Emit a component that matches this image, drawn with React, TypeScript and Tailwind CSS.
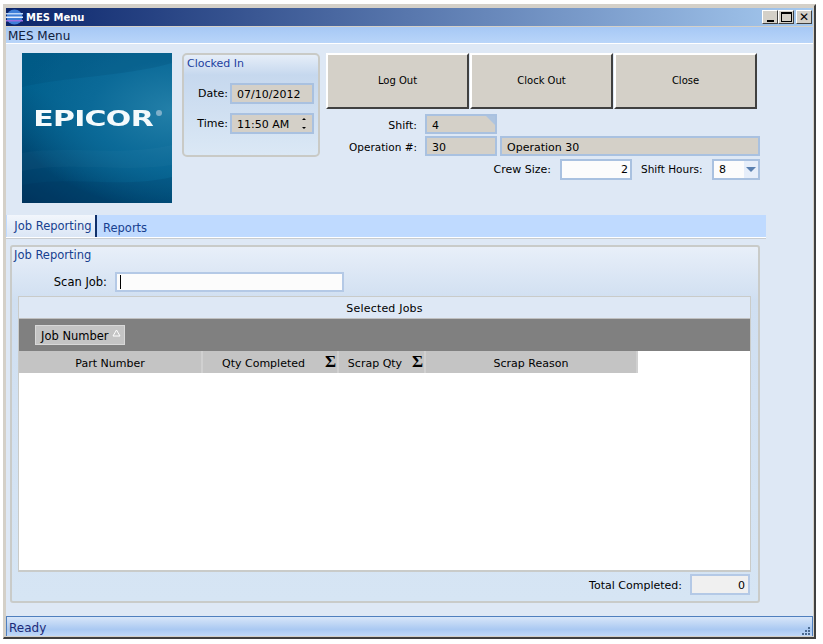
import React from "react";

const field = "flex items-center border-2 border-[#a9c1e0] bg-[#d4d0c8] px-[5px] pt-[2px] text-[11px] text-black";

function Sigma() {
  return <span className="w-[13px] text-center font-['Liberation_Serif',serif] text-[17px] font-bold leading-none text-black">Σ</span>;
}

function HeaderCell({ label, width, sigma }: { label: string; width: string; sigma?: boolean }) {
  return (
    <div className={`flex h-full items-center border-r-2 border-[#d0d0d0] ${width}`}>
      <span className="flex-1 pt-[3px] text-center">{label}</span>
      {sigma && <Sigma />}
    </div>
  );
}

function Logo() {
  return (
    <div className="relative flex h-[150px] w-[150px] shrink-0 items-center justify-center overflow-hidden bg-[radial-gradient(ellipse_at_100%_38%,#237fa8_0%,#0b6a98_38%,transparent_75%),linear-gradient(205deg,#05608f_0%,#005f8c_45%,#00365f_100%)]">
      <svg className="absolute inset-0" width="150" height="150" viewBox="0 0 150 150" fill="none">
        <path d="M0 34 C40 24 100 24 150 10 V0 H0 Z" fill="#00476f" opacity="0.2" />
        <path d="M0 100 C40 92 100 104 150 92 V112 C100 120 50 108 0 118 Z" fill="#ffffff" opacity="0.025" />
        <path d="M0 132 C50 122 100 136 150 124 V150 H0 Z" fill="#002a50" opacity="0.15" />
      </svg>
      <span className="relative ml-[-8px] mt-[-18px] scale-x-[1.36] font-['DejaVu_Sans',sans-serif] text-[22px] font-bold leading-none tracking-[-0.5px] text-[#f4fafc] blur-[0.5px]">
        EPICOR
      </span>
      <div className="absolute left-[134px] top-[57px] h-[6px] w-[6px] rounded-full bg-[#7fb0ca]" />
    </div>
  );
}

function TitleIcon() {
  return (
    <svg width="17" height="16" viewBox="0 0 17 16" className="shrink-0">
      <ellipse cx="8.5" cy="8" rx="8" ry="7.5" fill="#3f7fd8" />
      <rect x="0" y="4" width="17" height="1.5" fill="#bcd6f8" />
      <rect x="0" y="7.5" width="17" height="1.5" fill="#e4eefc" />
      <rect x="0" y="11" width="17" height="1.5" fill="#9a6fe0" />
    </svg>
  );
}

function WinButton({ children }: { children: React.ReactNode }) {
  return (
    <div className="flex h-[14px] w-[16px] items-center justify-center border border-b-[#404040] border-l-white border-r-[#404040] border-t-white bg-[#d4d0c8]">
      {children}
    </div>
  );
}

export default function App() {
  return (
    <div className="h-[644px] w-[823px] overflow-hidden bg-white pl-[3px] pt-[4px] font-['DejaVu_Sans',sans-serif] text-[11px] leading-none text-black">
      <div className="flex h-[635px] w-[813px] flex-col border-b-2 border-l border-r-2 border-t-2 border-b-[#404040] border-l-[#d4d0c8] border-r-[#404040] border-t-[#d4d0c8] bg-[#d4d0c8] pb-[1px] pl-[2px] pr-[1px] pt-[2px]">
        {/* title bar */}
        <div className="flex h-[18px] shrink-0 items-center bg-[linear-gradient(to_right,#0a246a,#a6caf0)] pr-[1px]">
          <TitleIcon />
          <span className="ml-[3px] flex-1 pt-[2px] text-[10px] font-bold text-white">MES Menu</span>
          <div className="flex items-center">
            <WinButton><div className="mt-[7px] h-[2px] w-[7px] bg-black" /></WinButton>
            <WinButton><div className="h-[10px] w-[11px] border border-t-2 border-black" /></WinButton>
            <div className="w-[2px]" />
            <WinButton><span className="text-[12px] font-bold">✕</span></WinButton>
          </div>
        </div>
        <div className="flex h-[17px] shrink-0 items-center border-t border-[#d4d0c8] bg-[linear-gradient(#a6c8f5,#b9d5f9)] pl-[2px] pt-[2px] text-[12px] text-[#10203c]">
          MES Menu
        </div>

        {/* form body */}
        <div className="flex min-h-0 flex-1 flex-col border-t border-white bg-[#dee8f5]">
          <div className="flex pl-[16px] pt-[9px]">
            <Logo />
            <div className="ml-[10px] h-[104px] w-[138px] shrink-0 rounded-[5px] border-2 border-[#c9cac6] bg-[linear-gradient(#e6eef8_0%,#c6d8ee_20%,#dbe8f5_100%)] pl-[3px] pr-[4px] pt-[3px]">
              <div className="text-[11px] text-[#1c3fa0]">Clocked In</div>
              <div className="mt-[14px] flex h-[21px] items-center justify-end gap-[2px]">
                <span>Date:</span>
                <div className={`${field} h-[21px] w-[84px]`}>07/10/2012</div>
              </div>
              <div className="mt-[9px] flex h-[21px] items-center justify-end gap-[2px]">
                <span>Time:</span>
                <div className={`${field} h-[21px] w-[84px] justify-between`}>
                  11:50 AM
                  <span className="mt-[-2px] flex flex-col gap-[7px] pr-[1px]">
                    <span className="h-0 w-0 border-x-2 border-b-2 border-x-transparent border-b-black" />
                    <span className="h-0 w-0 border-x-2 border-t-2 border-x-transparent border-t-black" />
                  </span>
                </div>
              </div>
            </div>

            <div className="ml-[6px] w-[434px] shrink-0">
              <div className="flex gap-[1px]">
                {["Log Out", "Clock Out", "Close"].map((label) => (
                  <div
                    key={label}
                    className="flex h-[56px] w-[143px] items-center justify-center border-2 border-b-[#404040] border-l-white border-r-[#404040] border-t-white bg-[#d4d0c8] text-[10px]"
                  >
                    {label}
                  </div>
                ))}
              </div>
              <div className="mt-[5px] flex h-[20px] items-center">
                <span className="w-[91px] pt-[2px] text-right">Shift:</span>
                <div className={`${field} relative ml-[8px] h-[20px] w-[72px] overflow-hidden`}>
                  4
                  <div className="absolute right-0 top-0 h-0 w-0 border-l-[9px] border-t-[9px] border-l-transparent border-t-[#aec4df]" />
                </div>
              </div>
              <div className="mt-[2px] flex h-[20px] items-center">
                <span className="w-[91px] pt-[2px] text-right text-[10.5px]">Operation #:</span>
                <div className={`${field} ml-[8px] h-[20px] w-[72px]`}>30</div>
                <div className={`${field} ml-[3px] h-[20px] w-[260px]`}>Operation 30</div>
              </div>
              <div className="mt-[2px] flex h-[21px] items-center pt-[1px]">
                <span className="w-[225px] text-right">Crew Size:</span>
                <div className="ml-[9px] flex h-[21px] w-[72px] items-center justify-end border-2 border-[#a9c1e0] bg-[#fcfcfc] pr-[2px]">2</div>
                <span className="ml-[9px] w-[63px] whitespace-nowrap text-[10.5px]">Shift Hours:</span>
                <div className="ml-[8px] flex h-[21px] w-[48px] items-center border-2 border-[#a9c1e0] bg-[#fcfcfc] pl-[5px]">
                  <span className="flex-1">8</span>
                  <div className="flex h-full w-[14px] items-center justify-center bg-[#e6eefa]">
                    <div className="h-0 w-0 border-x-[5px] border-t-[5px] border-x-transparent border-t-[#5a80b0]" />
                  </div>
                </div>
              </div>
            </div>
          </div>

          {/* tabs */}
          <div className="mt-[12px] w-[760px]">
            <div className="flex h-[22px] items-stretch bg-[#bfdaff]">
              <div className="ml-[1px] flex w-[90px] items-center justify-center border-r-2 border-[#10306a] bg-[linear-gradient(#f2f6fc,#dbe6f5)] pl-[4px] pt-[2px] text-[11.5px] text-[#17408f]">
                Job Reporting
              </div>
              <span className="ml-[6px] self-center pt-[5px] text-[11.5px] text-[#17408f]">Reports</span>
            </div>
            <div className="h-[3px] border-y border-y-white border-b-[#dee8f5] bg-[#c8ccd0]" />
          </div>

          {/* job reporting panel */}
          <div className="ml-[4px] mt-[5px] flex h-[358px] w-[750px] flex-col rounded-[3px] border-2 border-[#c9cbc9] bg-[linear-gradient(#e8eff9_0%,#d0dff1_15%,#d6e5f4_100%)] px-[6px]">
            <div className="-ml-[4px] pt-[3px] text-[11.5px] text-[#17408f]">Job Reporting</div>
            <div className="mt-[10px] flex h-[20px] shrink-0 items-center">
              <span className="w-[89px] pt-[3px] text-right text-[11.5px]">Scan Job:</span>
              <div className="ml-[8px] flex h-[20px] w-[229px] items-center border-2 border-[#b4c9e6] bg-[#fcfcfc] pl-[3px]">
                <div className="h-[14px] w-[1px] bg-black" />
              </div>
            </div>

            <div className="mt-[4px] flex h-[276px] w-[733px] shrink-0 flex-col border border-b-2 border-[#c9cbc9] bg-white">
              <div className="flex h-[22px] shrink-0 items-center justify-center border-b border-[#c0c0c0] bg-[#dee8f5] pt-[3px] tracking-[0.2px]">Selected Jobs</div>
              <div className="flex h-[32px] shrink-0 items-center bg-[#808080] pl-[16px]">
                <div className="flex h-[20px] w-[90px] items-center border border-[#d8d8d8] bg-[#c4c4c4] pl-[5px] pt-[4px] text-[11.5px]">
                  Job Number
                  <svg width="9" height="8" viewBox="0 0 9 8" className="ml-[3px] mt-[-8px]">
                    <path d="M4.5 1 L8 7 H1 Z" fill="#c4c4c4" stroke="#ffffff" />
                  </svg>
                </div>
              </div>
              <div className="flex h-[22px] w-[619px] shrink-0 items-center bg-[#c4c4c4]">
                <HeaderCell label="Part Number" width="w-[184px]" />
                <HeaderCell label="Qty Completed" width="w-[136px]" sigma />
                <HeaderCell label="Scrap Qty" width="w-[87px]" sigma />
                <HeaderCell label="Scrap Reason" width="w-[212px]" />
              </div>
            </div>

            <div className="mt-[2px] flex h-[21px] shrink-0 items-center justify-end pr-[2px]">
              <span className="pt-[2px]">Total Completed:</span>
              <div className="ml-[8px] flex h-[21px] w-[60px] items-center justify-end border-2 border-[#b4c9e6] bg-[#f0f0f0] pr-[3px] pt-[2px]">0</div>
            </div>
          </div>

          {/* status bar */}
          <div className="mt-auto flex h-[20px] shrink-0 items-center justify-between border-l border-r border-t border-[#4f7fbe] bg-[linear-gradient(#d8e6f9_0%,#aac9f2_65%,#c0d8f8_100%)] pl-[2px] pr-[1px] pt-[2px] text-[12px] text-[#1c2a78]">
            Ready
            <svg width="10" height="10" viewBox="0 0 10 10" fill="#4a6a90" className="self-end">
              <rect x="7" y="1" width="2" height="2" />
              <rect x="4" y="4" width="2" height="2" />
              <rect x="7" y="4" width="2" height="2" />
              <rect x="1" y="7" width="2" height="2" />
              <rect x="4" y="7" width="2" height="2" />
              <rect x="7" y="7" width="2" height="2" />
            </svg>
          </div>
        </div>
      </div>
    </div>
  );
}
